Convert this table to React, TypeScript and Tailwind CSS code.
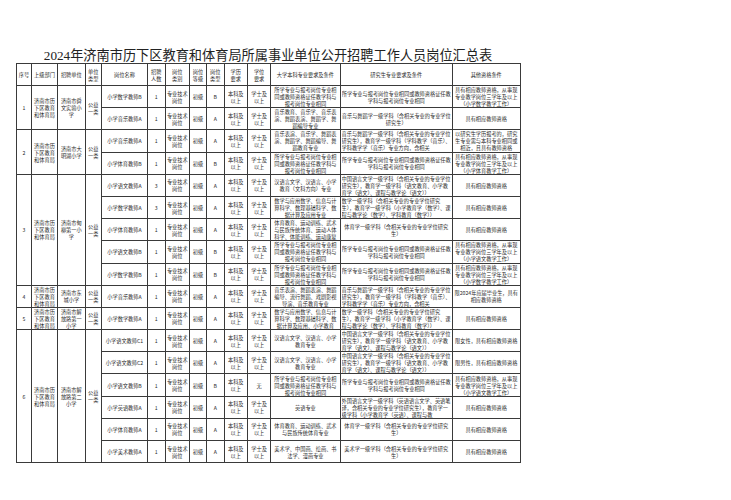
type Post = {
  name: string
  count: string
  type: string
  degree: string
  ug: string
  pg: string
  other: string
}

type Group = {
  no: string
  dept: string
  unit: string
  unitType: string
  posts: Post[]
}

const SAME = '所学专业与报考岗位专业相同或教师资格证任教学科与报考岗位专业相同'
const HAS = '具有相应教师资格'
const MUSIC_PG = '音乐与舞蹈学一级学科（含相关专业的专业学位研究生），教育学一级学科（学科教学（音乐）、学科教学学（音乐）专业方向，含相关'
const CHN_PG = '中国语言文学一级学科（含相关专业的专业学位研究生），教育学一级学科（语文教育、小学教育学（语文）、课程与教学论（语文））'
const MATH_PG = '数学一级学科（含相关专业的专业学位研究生），教育学一级学科（小学教育学（数学）、课程与教学论（数学）、学科教育（数学））'

const groups: Group[] = [
  {
    no: '1',
    dept: '济南市历下区教育和体育局',
    unit: '济南市舜文实验小学',
    unitType: '公益一类',
    posts: [
      { name: '小学数学教师B', count: '1', type: 'B', degree: '学士及以上', ug: SAME, pg: SAME, other: '具有相应教师资格，从事现专业教学岗位三学年及以上（小学数学教学工作）' },
      { name: '小学音乐教师A', count: '1', type: 'A', degree: '学士及以上', ug: '音乐教育、音乐学、音乐表演、舞蹈表演、舞蹈学、舞蹈编导专业', pg: '音乐与舞蹈学一级学科（含相关专业的专业学位研究生）', other: HAS },
    ],
  },
  {
    no: '2',
    dept: '济南市历下区教育和体育局',
    unit: '济南市大明湖小学',
    unitType: '公益一类',
    posts: [
      { name: '小学音乐教师A', count: '1', type: 'A', degree: '学士及以上', ug: '音乐表演、音乐学、舞蹈表演、舞蹈学、舞蹈编导、舞蹈教育专业', pg: MUSIC_PG, other: '以研究生学历报考的，研究生专业需与本科专业相同或相近，且具有教师资格' },
      { name: '小学体育教师B', count: '1', type: 'B', degree: '学士及以上', ug: SAME, pg: SAME, other: '具有相应教师资格，从事现专业教学岗位三学年及以上（小学体育教学工作）' },
    ],
  },
  {
    no: '3',
    dept: '济南市历下区教育和体育局',
    unit: '济南市甸柳第一小学',
    unitType: '公益一类',
    posts: [
      { name: '小学语文教师A', count: '3', type: 'A', degree: '学士及以上', ug: '汉语言文学、汉语言、小学教育（文科方向）专业', pg: CHN_PG, other: HAS },
      { name: '小学数学教师A', count: '3', type: 'A', degree: '学士及以上', ug: '数学与应用数学、信息与计算科学、数理基础科学、数据计算及应用专业', pg: MATH_PG, other: HAS },
      { name: '小学体育教师A', count: '1', type: 'A', degree: '学士及以上', ug: '体育教育、运动训练、武术与民族传统体育、运动人体科学、体能训练、运动康复', pg: '体育学一级学科（含相关专业的专业学位研究生）', other: HAS },
      { name: '小学语文教师B', count: '1', type: 'B', degree: '学士及以上', ug: SAME, pg: SAME, other: '具有相应教师资格，从事现专业教学岗位三学年及以上（小学语文教学工作）' },
      { name: '小学数学教师B', count: '1', type: 'B', degree: '学士及以上', ug: SAME, pg: SAME, other: '具有相应教师资格，从事现专业教学岗位三学年及以上（小学数学教学工作）' },
    ],
  },
  {
    no: '4',
    dept: '济南市历下区教育和体育局',
    unit: '济南市东城小学',
    unitType: '公益一类',
    posts: [
      { name: '小学音乐教师A', count: '1', type: 'A', degree: '学士及以上', ug: '音乐表演、舞蹈表演、舞蹈编导、流行舞蹈、戏剧影视导演、音乐教育专业', pg: MUSIC_PG, other: '限2024年应届毕业生，具有相应教师资格' },
    ],
  },
  {
    no: '5',
    dept: '济南市历下区教育和体育局',
    unit: '济南市解放路第一小学',
    unitType: '公益一类',
    posts: [
      { name: '小学数学教师A', count: '1', type: 'A', degree: '学士及以上', ug: '数学与应用数学、信息与计算科学、数理基础科学、数据计算及应用、小学教育', pg: MATH_PG, other: HAS },
    ],
  },
  {
    no: '6',
    dept: '济南市历下区教育和体育局',
    unit: '济南市解放路第二小学',
    unitType: '公益一类',
    posts: [
      { name: '小学语文教师C1', count: '1', type: 'A', degree: '学士及以上', ug: '汉语言文学、汉语言、小学教育专业', pg: CHN_PG, other: '限女性，具有相应教师资格' },
      { name: '小学语文教师C2', count: '1', type: 'A', degree: '学士及以上', ug: '汉语言文学、汉语言、小学教育专业', pg: CHN_PG, other: '限男性，具有相应教师资格' },
      { name: '小学语文教师B', count: '1', type: 'B', degree: '无', ug: SAME, pg: SAME, other: '具有相应教师资格，从事现专业教学岗位三学年及以上（小学语文教学工作）' },
      { name: '小学英语教师A', count: '1', type: 'A', degree: '学士及以上', ug: '英语专业', pg: '外国语言文学一级学科（英语语言文学、英语笔译，含相关专业的专业学位研究生），教育学一级学科（小学教育学（英语）、课程与教', other: HAS },
      { name: '小学体育教师A', count: '1', type: 'A', degree: '学士及以上', ug: '体育教育、运动训练、武术与民族传统体育专业', pg: '体育学一级学科（含相关专业的专业学位研究生）', other: HAS },
      { name: '小学美术教师A', count: '1', type: 'A', degree: '学士及以上', ug: '美术学、中国画、绘画、书法学、漫画专业', pg: '美术学一级学科（含相关专业的专业学位研究生）', other: HAS },
    ],
  },
]

const widths = [15, 26, 27.6, 16.4, 46, 17.6, 24.4, 17, 17.6, 23.4, 23.3, 69.3, 112.4, 67.6]

const head = [
  '序号', '上级部门', '招聘单位', '单位\n类型', '岗位名称', '招聘\n人数', '岗位\n类别',
  '岗位\n等级', '岗位\n类型', '学历\n要求', '学位\n要求', '大学本科专业要求及条件',
  '研究生专业要求及条件', '其他资格条件',
]

const td = 'border border-[#3a3a3a] px-[1px] text-center align-middle'

function Clip({ text }: { text: string }) {
  return <div className="line-clamp-3 whitespace-pre-line">{text}</div>
}

export default function App() {
  return (
    <div className="h-[500px] w-[731px] overflow-hidden bg-white font-['Noto_Sans_CJK_SC',sans-serif] text-[#2a2a2a]">
      <div className="ml-[16px] flex h-[63px] w-[504px] items-end justify-center">
        <h1 className="text-[13.2px] leading-[15px] font-normal text-[#222]">
          <span className="font-['Liberation_Serif']">2024</span>年济南市历下区教育和体育局所属事业单位公开招聘工作人员岗位汇总表
        </h1>
      </div>
      <table className="ml-[16px] w-[504px] table-fixed border-collapse border border-[#3a3a3a] text-[5.2px] leading-[7px]">
        <colgroup>
          {widths.map((w, i) => (
            <col key={i} style={{ width: w }} />
          ))}
        </colgroup>
        <thead>
          <tr className="h-[22px]">
            {head.map((h) => (
              <th key={h} className={`${td} font-normal`}>
                <Clip text={h} />
              </th>
            ))}
          </tr>
        </thead>
        <tbody>
          {groups.map((g) =>
            g.posts.map((p, i) => (
              <tr key={g.no + p.name} className="h-[22.2px]">
                {i === 0 && (
                  <>
                    <td rowSpan={g.posts.length} className={td}>{g.no}</td>
                    <td rowSpan={g.posts.length} className={td}>{g.dept}</td>
                    <td rowSpan={g.posts.length} className={td}>{g.unit}</td>
                    <td rowSpan={g.posts.length} className={td}>{g.unitType}</td>
                  </>
                )}
                <td className={td}>{p.name}</td>
                <td className={td}>{p.count}</td>
                <td className={td}>专业技术岗位</td>
                <td className={td}>初级</td>
                <td className={td}>{p.type}</td>
                <td className={td}>本科及以上</td>
                <td className={td}>{p.degree}</td>
                <td className={td}><Clip text={p.ug} /></td>
                <td className={p.pg.length > 26 && p.pg !== SAME ? `${td} text-left` : td}>
                  <Clip text={p.pg} />
                </td>
                <td className={td}><Clip text={p.other} /></td>
              </tr>
            )),
          )}
        </tbody>
      </table>
    </div>
  )
}
